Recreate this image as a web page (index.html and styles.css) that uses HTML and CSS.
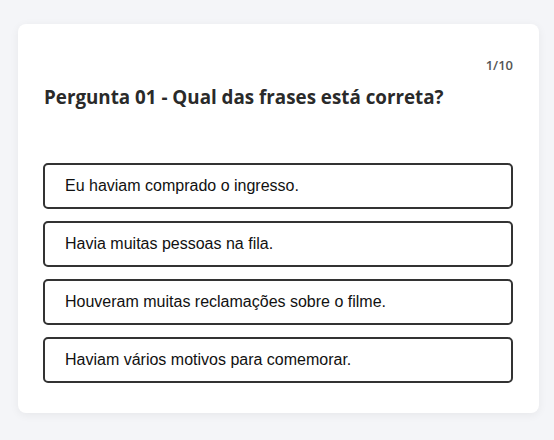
FILE: index.html
```html
<!DOCTYPE html>
<html lang="pt">
<head>
<meta charset="utf-8">
<link rel="stylesheet" href="styles.css">
</head>
<body>
<main class="card">
  <div class="counter">1/10</div>
  <h1 class="question">Pergunta 01 - Qual das frases está correta?</h1>
  <div class="options">
    <button class="option">Eu haviam comprado o ingresso.</button>
    <button class="option">Havia muitas pessoas na fila.</button>
    <button class="option">Houveram muitas reclamações sobre o filme.</button>
    <button class="option">Haviam vários motivos para comemorar.</button>
  </div>
</main>
</body>
</html>
```
FILE: styles.css
```css
html, body {
  margin: 0;
  padding: 0;
  background: #f4f5f8;
}
body {
  padding: 24px 15px 28px 18px;
}
.card {
  background: #ffffff;
  border-radius: 8px;
  box-shadow: 0 2px 10px rgba(0, 0, 0, 0.06);
  padding: 32px 26px 29px 25px;
  height: 389px;
  box-sizing: border-box;
}
.counter {
  text-align: right;
  font-family: "Open Sans", sans-serif;
  font-weight: 600;
  font-size: 13px;
  color: #555;
  line-height: 18px;
}
.question {
  margin: 10px 0 0 1px;
  font-family: "Open Sans", sans-serif;
  font-weight: 700;
  font-size: 18.8px;
  line-height: 26px;
  color: #2a2a2a;
}
.options {
  margin-top: 53px;
  display: flex;
  flex-direction: column;
  gap: 12px;
}
.option {
  display: block;
  width: 100%;
  height: 46px;
  box-sizing: border-box;
  border: 2px solid #333;
  border-radius: 5px;
  background: #fff;
  text-align: left;
  padding: 0 20px;
  font-family: "Liberation Sans", Arial, sans-serif;
  font-size: 16px;
  color: #111;
}
```
